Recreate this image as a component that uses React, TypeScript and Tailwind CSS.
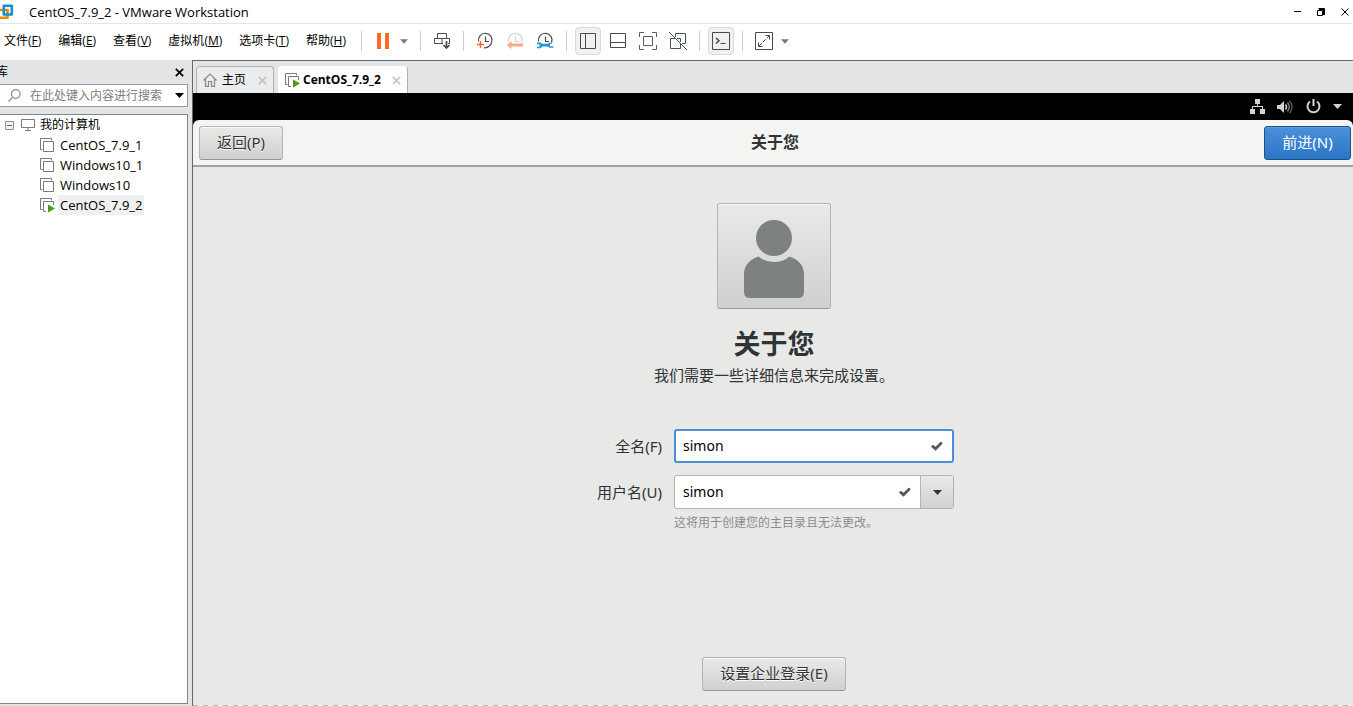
import React, { useState } from 'react';

const hostFont = "font-['Open_Sans','Noto_Sans_CJK_SC',sans-serif]";
const guestFont = "font-['Noto_Sans','Noto_Sans_CJK_SC',sans-serif]";

const menus = [
  { label: '文件', key: 'F' },
  { label: '编辑', key: 'E' },
  { label: '查看', key: 'V' },
  { label: '虚拟机', key: 'M' },
  { label: '选项卡', key: 'T' },
  { label: '帮助', key: 'H' },
];

const machines = [
  { name: 'CentOS_7.9_1', running: false },
  { name: 'Windows10_1', running: false },
  { name: 'Windows10', running: false },
  { name: 'CentOS_7.9_2', running: true },
];

const guestButton =
  'h-[34px] border rounded-[3px] text-[15px] leading-5 border-[#b4b4b1] border-b-[#979795] bg-gradient-to-b from-[#e9e9e7] to-[#d0d0ce] text-[#2e3436] shadow-[inset_0_1px_#f8f8f7] [text-shadow:0_1px_#fff]';

const Separator = () => <span className="w-px h-5 bg-[#cfcfcf]" />;

const Caret = ({ className }: { className: string }) => (
  <svg width="9" height="5" viewBox="0 0 9 5" className={className}>
    <path d="M0 0h9L4.5 5z" fill="currentColor" />
  </svg>
);

const VmIcon = ({ running }: { running: boolean }) => (
  <svg width="15" height="15" viewBox="0 0 15 15" fill="none" className="shrink-0">
    <path d="M2.5 11.5h-2V.5h11v2" stroke="#7a7a7a" />
    {running ? (
      <>
        <path d="M6 13.5H3.5v-10h10V7" stroke="#7a7a7a" />
        <path d="M8 6.5l7 4-7 4z" fill="#4a9c12" />
      </>
    ) : (
      <path d="M3.5 3.5h10v10h-10z" stroke="#7a7a7a" />
    )}
  </svg>
);

const CloseX = ({ size, className }: { size: number; className: string }) => (
  <svg width={size} height={size} viewBox="0 0 9 9" className={className}>
    <path d="M.8.8l7.4 7.4M8.2.8L.8 8.2" stroke="currentColor" strokeWidth="1.7" />
  </svg>
);

const Check = () => (
  <svg width="12" height="10" viewBox="0 0 12 10" className="shrink-0 text-[#555a5b]">
    <path d="M1.8 5.4l2.7 2.4L10 2.2" stroke="currentColor" strokeWidth="2.8" strokeLinecap="round" fill="none" />
  </svg>
);

const Clock = ({ color, children }: { color: string; children: React.ReactNode }) => (
  <svg width="18" height="18" viewBox="0 0 18 18" fill="none">
    <g stroke={color} strokeWidth="1.2">
      <path d="M2.6 9.5A6.8 6.8 0 1 1 15.6 10.5" />
      <path d="M9.5 4.5v5H13" />
    </g>
    {children}
  </svg>
);

const TitleBar = () => (
  <header className="h-6 shrink-0 flex items-center pr-1 border-b border-[#e5e5e5] text-[13px] leading-5">
    <svg width="14" height="16" viewBox="0 0 14 16" fill="none">
      <path d="M0 6h7.500v7.800H0" stroke="#f38b00" strokeWidth="2.600" strokeLinejoin="round" />
      <path d="M3.800 1.800h8v8.700h-8z" stroke="#0c93d4" strokeWidth="2.600" strokeLinejoin="round" />
      <path d="M5.200 6h2.300v3" stroke="#f38b00" strokeWidth="1.600" />
    </svg>
    <h1 className="ml-[15px] flex-1">CentOS_7.9_2 - VMware Workstation</h1>
    <div className="flex items-center gap-4">
      <button aria-label="最小化">
        <svg width="7" height="9" viewBox="0 0 7 9"><path d="M0 4h7v1H0z" /></svg>
      </button>
      <button aria-label="还原">
        <svg width="8" height="8" viewBox="0 0 8 8" fill="none" stroke="#000">
          <path d="M.5 2.500h5v5h-5zM1.500.5h6V7M6.500 1v6M2 1.500h5" />
        </svg>
      </button>
      <button aria-label="关闭">
        <svg width="8" height="8" viewBox="0 0 8 8"><path d="M.5.5l7 7M7.500.5l-7 7" stroke="#000" /></svg>
      </button>
    </div>
  </header>
);

const Toolbar = () => (
  <div className="h-9 shrink-0 flex items-center pb-[2px] text-[12px] leading-5">
    <nav className="flex items-center gap-[17px] pl-1 w-[361px] whitespace-nowrap">
      {menus.map((m) => (
        <button key={m.key}>
          {m.label}(<u>{m.key}</u>)
        </button>
      ))}
    </nav>
    <Separator />
    <button aria-label="挂起" className="ml-[15px]">
      <svg width="13" height="16" viewBox="0 0 13 16" fill="#fb6b22">
        <path d="M0 0h4v16H0zM8 0h4v16H8z" />
      </svg>
    </button>
    <button aria-label="电源选项" className="ml-[10px] mr-3"><Caret className="w-2 text-[#7a7a7a]" /></button>
    <Separator />
    <button aria-label="发送 Ctrl+Alt+Del" className="ml-[13px] mr-3">
      <svg width="17" height="18" viewBox="0 0 17 18" fill="none" stroke="#4a4a4a">
        <path d="M3.500 1.500h9v5h-9zM9 11.500H.5v-5h15v5h-1.500M8 6.500v5" />
        <path d="M12.500 9v7M9.500 13l3 3 3-3" strokeWidth="1.700" />
      </svg>
    </button>
    <Separator />
    <div className="flex items-center gap-3 mx-3">
      <button aria-label="拍摄快照">
        <Clock color="#4a4a4a">
          <path d="M8 15.700A6.800 6.800 0 0 0 15.600 10.500" stroke="#4a4a4a" strokeWidth="1.200" />
          <path d="M4.500 9v7M1 12.500h7" stroke="#fb6b22" strokeWidth="1.400" />
        </Clock>
      </button>
      <button aria-label="恢复快照">
        <Clock color="#cfcfcf"><path d="M1 13l4.500-4v2.500H17v3H5.500V17z" fill="#fbab82" /></Clock>
      </button>
      <button aria-label="管理快照">
        <Clock color="#4a4a4a">
          <path
            d="M1 10.500h3.500l1.800 1.300h5.400l1.800-1.300H16v1.300h-2v2.400h3.500v1.600h-4.200l-1.600-1.300H6.300l-1.800 1.800H1v-1.500h2.500v-2.500H1z"
            fill="#2797dc"
          />
        </Clock>
      </button>
    </div>
    <Separator />
    <div className="flex items-center ml-2 mr-1">
      <button aria-label="显示库" aria-pressed="true" className="w-[26px] h-7 flex items-center justify-center rounded border border-[#d9d9d9] bg-[#f0f0f0]">
        <svg width="16" height="16" viewBox="0 0 16 16" fill="none" stroke="#4a4a4a"><path d="M.5.5h15v15H.5zM5.500.5v15" /></svg>
      </button>
      <button aria-label="显示缩略图栏" className="w-[34px] flex justify-center">
        <svg width="16" height="16" viewBox="0 0 16 16" fill="none" stroke="#4a4a4a"><path d="M.5.5h15v14H.5zM.5 9.500h15" /></svg>
      </button>
      <button aria-label="全屏" className="w-[26px] flex justify-center">
        <svg width="18" height="18" viewBox="0 0 18 18" fill="none" stroke="#5a5a5a">
          <path d="M.5 5V.5H5M13 .5h4.500V5M17.500 13v4.500H13M5 17.500H.5V13M4.500 4.500h9v9h-9z" />
        </svg>
      </button>
      <button aria-label="Unity 模式" className="w-[34px] flex justify-center">
        <svg width="18" height="18" viewBox="0 0 18 18" fill="none" stroke="#45525f">
          <path d="M6.500 5V1.500h10v10H13M6 6.500H1.500v10h10V12M8 6.500h3.500V10M0 0l18 18" />
        </svg>
      </button>
    </div>
    <Separator />
    <button aria-label="控制台视图" aria-pressed="true" className="w-[26px] h-7 mx-2 flex items-center justify-center rounded border border-[#d9d9d9] bg-[#f0f0f0]">
      <svg width="18" height="18" viewBox="0 0 18 18" fill="none" stroke="#4a4a4a" className="shrink-0">
        <path d="M.5.5h17v17H.5z" />
        <path d="M4 6l3 2.700L4 11.500" strokeWidth="1.500" />
        <path d="M8.500 11.500h5" />
      </svg>
    </button>
    <Separator />
    <button aria-label="自由拉伸" className="ml-3 flex items-center gap-2">
      <svg width="18" height="18" viewBox="0 0 18 18" fill="none" stroke="#4a4a4a">
        <path d="M.5.5h17v17H.5zM10.500 3.500h4v4M7.500 14.500h-4v-4" />
        <path d="M4 14L14 4" strokeDasharray="4 1.500" />
      </svg>
      <Caret className="w-2 text-[#7a7a7a]" />
    </button>
  </div>
);

const Library = () => (
  <aside className="w-[192px] shrink-0 flex flex-col bg-[#e3e4e6] text-[12px] leading-5">
    <div className="h-6 flex items-center justify-between pr-2 overflow-hidden">
      <h2 className="-ml-1">库</h2>
      <button aria-label="关闭库"><CloseX size={9} className="text-black" /></button>
    </div>
    <div className="h-[23px] mr-1 flex items-center bg-white border border-l-0 border-[#9a9a9a]">
      <svg width="13" height="13" viewBox="0 0 13 13" fill="none" stroke="#8c8c8c" strokeWidth="1.200" className="ml-2 shrink-0">
        <circle cx="7.800" cy="5" r="4.300" />
        <path d="M4.700 8.200L.5 12.500" />
      </svg>
      <input
        type="text"
        aria-label="搜索"
        placeholder="在此处键入内容进行搜索"
        className="ml-[9px] flex-1 min-w-0 h-5 outline-none placeholder:text-[#7d7d7d]"
      />
      <button aria-label="搜索选项" className="mr-[3px]"><Caret className="text-black" /></button>
    </div>
    <div className="mt-[7px] mr-1 mb-[2px] flex-1 bg-white border border-l-0 border-[#82858f]">
      <div className="h-5 flex items-center pl-[5px]">
        <svg width="9" height="9" viewBox="0 0 9 9" fill="#f6f6f6">
          <path d="M.5.5h8v8h-8z" stroke="#919191" />
          <path d="M2 4.500h5" stroke="#4463b8" />
        </svg>
        <svg width="14" height="12" viewBox="0 0 14 12" fill="none" stroke="#7a7a7a" className="ml-[7px] mr-[5px]">
          <path d="M.5.5h13v8H.5zM7 9v2M4 11.500h6" />
        </svg>
        我的计算机
      </div>
      <ul>
        {machines.map((m) => (
          <li key={m.name} className="h-5 flex items-center pl-10 gap-[3px] text-[13px]">
            <VmIcon running={m.running} />
            <span className={m.running ? 'px-[2px] bg-[#f0f0f0]' : 'px-[2px]'}>{m.name}</span>
          </li>
        ))}
      </ul>
    </div>
  </aside>
);

const Tabs = () => (
  <div className="h-8 shrink-0 flex items-end gap-1 pl-[3px] bg-[#e3e4e6] text-[12px] leading-5">
    <div className="h-[27px] w-[78px] flex items-center px-[6px] border border-b-0 border-[#b0b0b0] rounded-t bg-[#ebecee]">
      <button className="flex flex-1 items-center gap-[5px]">
        <svg width="14" height="14" viewBox="0 0 14 14" fill="none" stroke="#8a8a8a" strokeWidth="1.200">
          <path d="M.5 7.500L7 1l6.500 6.500M2.500 6v7.400h3V8.500h3v4.900h3V6" />
        </svg>
        主页
      </button>
      <button aria-label="关闭主页"><CloseX size={9} className="text-[#c3c3c3]" /></button>
    </div>
    <div className="h-[27px] w-[130px] flex items-center px-[6px] border border-b-0 border-white border-r-[#b0b0b0] rounded-t bg-white">
      <button className="flex flex-1 items-center gap-[3px] font-bold">
        <VmIcon running />
        CentOS_7.9_2
      </button>
      <button aria-label="关闭 CentOS_7.9_2"><CloseX size={9} className="text-[#c3c3c3]" /></button>
    </div>
  </div>
);

const Guest = () => {
  const [fullName, setFullName] = useState('simon');
  const [userName, setUserName] = useState('simon');

  return (
    <div className={`flex-1 min-h-0 flex flex-col bg-black text-[15px] leading-5 text-[#2e3436] ${guestFont}`}>
      <div className="h-[27px] shrink-0 flex items-center justify-end pr-[11px] text-[#d3d3d3]">
        <svg width="15" height="15" viewBox="0 0 15 15" fill="currentColor">
          <path d="M5 0h5v5H8v2h5v3h2v5h-5v-5h2V8H3v2h2v5H0v-5h2V7h5V5H5z" />
        </svg>
        <svg width="16" height="14" viewBox="0 0 16 14" fill="none" className="ml-3">
          <path d="M0 5h3l4-4v12L3 9H0z" fill="currentColor" />
          <path d="M8.500 4.500q2 2.500 0 5" stroke="currentColor" strokeWidth="1.500" />
          <path d="M10.500 2.500q3.500 4.500 0 9" stroke="#777" strokeWidth="1.500" />
          <path d="M12.500.8q5 6.200 0 12.400" stroke="#555" strokeWidth="1.500" />
        </svg>
        <svg width="15" height="15" viewBox="0 0 15 15" fill="none" stroke="currentColor" strokeWidth="2" className="ml-[13px]">
          <path d="M4 2.500a6 6 0 1 0 7 0M7.500 0v7" />
        </svg>
        <Caret className="ml-3" />
      </div>

      <div className="h-[47px] shrink-0 grid grid-cols-3 items-center pl-[6px] pr-[2px] rounded-t-md bg-[#f4f4f3] border-b-2 border-[#a1a19f]">
        <button className={`${guestButton} w-[84px] pb-[2px]`}>返回(P)</button>
        <h2 className="pb-[2px] text-center text-[16px] font-bold">关于您</h2>
        <button className="h-[34px] w-[87px] pb-[2px] justify-self-end border border-[#1c5187] rounded-[3px] bg-gradient-to-b from-[#4a90d9] to-[#2a76c6] text-white shadow-[inset_0_1px_#5f9ddd]">
          前进(N)
        </button>
      </div>

      <main className="flex-1 flex flex-col items-center bg-[#e8e8e6]">
        <div className="flex-1 flex flex-col items-center pl-[2px]">
          <button
            aria-label="头像"
            className="mt-9 w-[114px] h-[106px] flex justify-center items-center border border-[#b4b4b1] border-b-[#979795] rounded-[3px] bg-gradient-to-b from-[#e9e9e7] to-[#d0d0ce] shadow-[inset_0_1px_#f8f8f7]"
          >
            <svg width="60" height="80" viewBox="0 0 60 80" fill="#7e8182" className="mt-[6px]">
              <circle cx="30" cy="19" r="18" />
              <path d="M14.500 37.500C8 39.500 0 45 0 55v18q0 6 6 6h48q6 0 6-6V55c0-10-8-15.500-14.500-17.500Q39 43 30 43t-15.500-5.500z" />
            </svg>
          </button>
          <h1 className="mt-[19px] text-[27px] leading-8 font-bold">关于您</h1>
          <p className="mt-[5px]">我们需要一些详细信息来完成设置。</p>

          <form className="mt-11 grid grid-cols-[68px_280px] gap-x-3 items-center">
            <label htmlFor="full-name" className="text-right whitespace-nowrap">全名(F)</label>
            <div className="h-[34px] flex items-center pl-[7px] pr-[9px] border-2 border-[#4a90d9] rounded-[3px] bg-white">
              <input
                id="full-name"
                type="text"
                value={fullName}
                onChange={(e) => setFullName(e.target.value)}
                className="flex-1 min-w-0 text-[14px] text-black outline-none"
              />
              <Check />
            </div>
            <label htmlFor="user-name" className="mt-3 text-right whitespace-nowrap">用户名(U)</label>
            <div className="mt-3 h-[34px] flex items-stretch border border-[#b4b4b1] rounded-[3px] bg-white overflow-hidden">
              <div className="flex-1 flex items-center pl-2 pr-[9px]">
                <input
                  id="user-name"
                  type="text"
                  value={userName}
                  onChange={(e) => setUserName(e.target.value)}
                  className="flex-1 min-w-0 text-[14px] text-black outline-none"
                />
                <Check />
              </div>
              <button
                type="button"
                aria-label="选择用户名"
                className="w-[33px] flex items-center justify-center border-l border-[#b4b4b1] bg-gradient-to-b from-[#e9e9e7] to-[#d0d0ce]"
              >
                <Caret className="text-[#2e3436]" />
              </button>
            </div>
            <p className="col-start-2 mt-[6px] text-[12px] leading-4 text-[#8b8e8f]">这将用于创建您的主目录且无法更改。</p>
          </form>

          <button className={`${guestButton} mt-auto mb-[14px] w-[144px] pb-[2px]`}>设置企业登录(E)</button>
        </div>
        <div className="h-px self-stretch bg-[repeating-linear-gradient(to_right,#b9b9b9_0_5px,#f4f4f4_5px_10px)]" />
      </main>
    </div>
  );
};

const App: React.FC = () => (
  <div className={`h-screen flex flex-col overflow-hidden bg-white text-black ${hostFont}`}>
    <TitleBar />
    <Toolbar />
    <div className="flex-1 min-h-0 flex">
      <Library />
      <div className="flex-1 min-w-0 flex flex-col border-l border-t border-[#66676a]">
        <Tabs />
        <Guest />
      </div>
    </div>
  </div>
);

export default App;
